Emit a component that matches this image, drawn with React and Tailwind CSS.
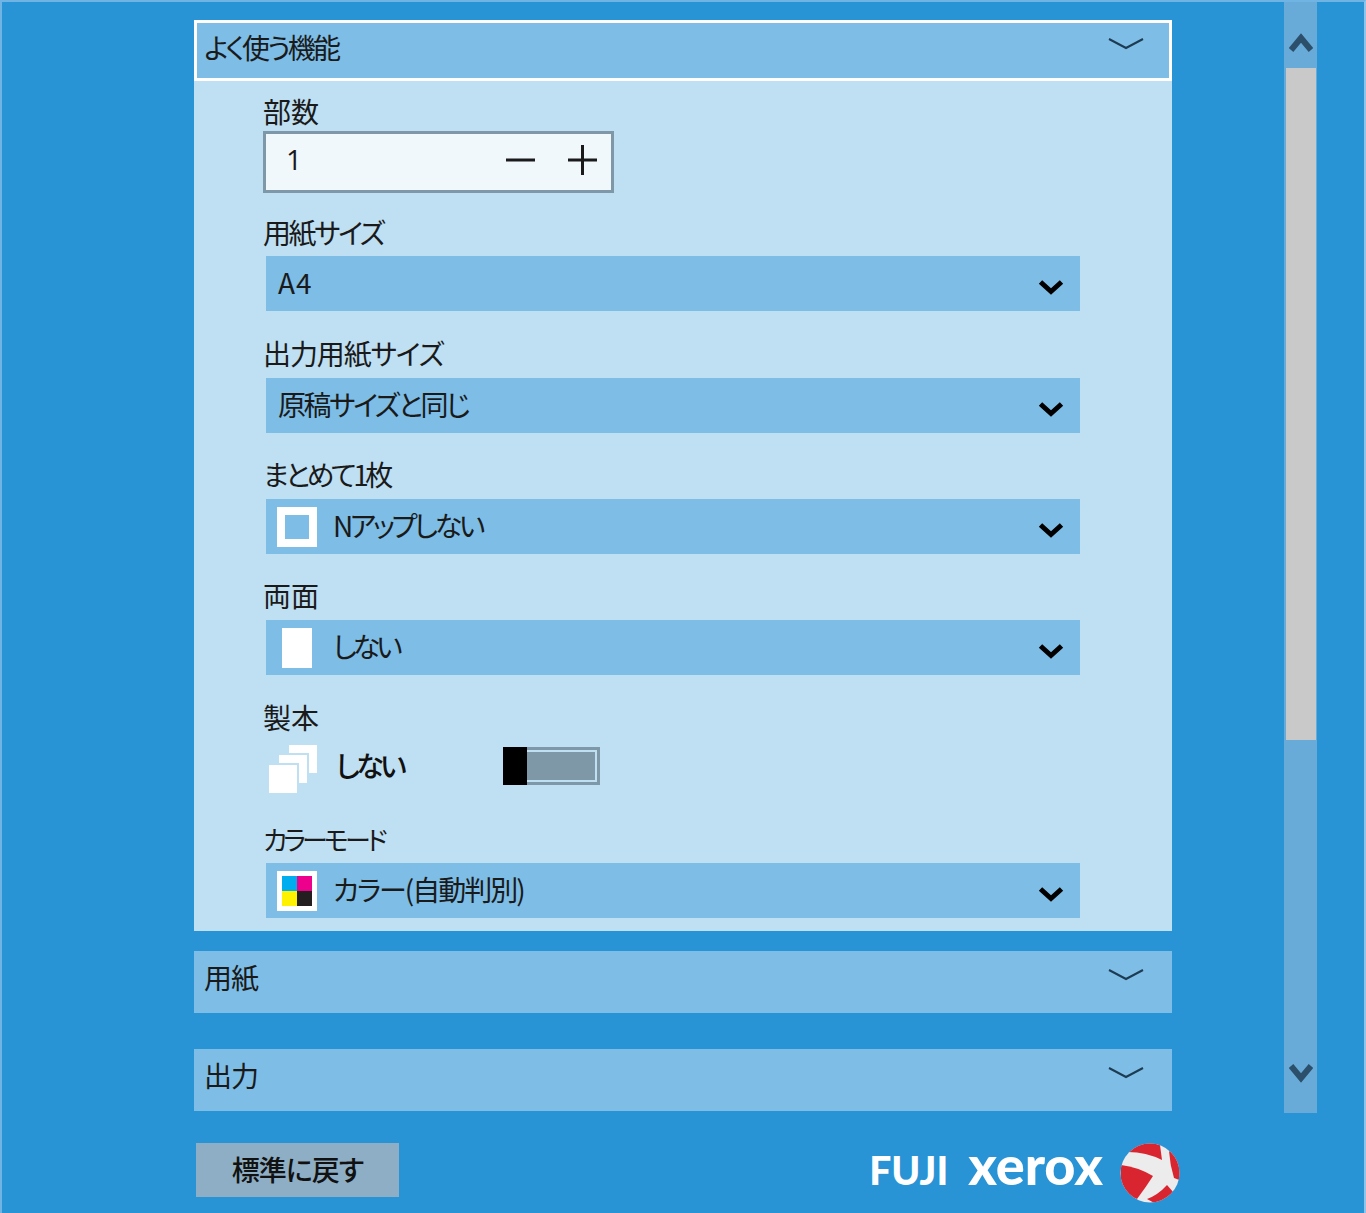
import React from 'react';

const jp = "font-['Noto_Sans_CJK_JP','Noto_Sans',sans-serif]";

const Chevron = () => (
  <svg width="26" height="18" viewBox="0 0 26 18" fill="none" className="mt-[6px] shrink-0">
    <path d="M2.5 4 L13 13.5 L23.5 4" stroke="#000" strokeWidth="5" />
  </svg>
);

const ThinChevron = () => (
  <svg width="36" height="14" viewBox="0 0 36 14" fill="none">
    <path d="M1 2 L18 11 L35 2" stroke="#1d3b52" strokeWidth="2" />
  </svg>
);

const Label = ({ tracking = 'text-[28px]', children }) => (
  <div className={`h-[36px] pl-[69px] leading-[34px] text-[#1a1a1a] [font-feature-settings:'palt'] ${tracking}`}>{children}</div>
);

const Select = ({ icon, tracking, children }) => (
  <div className="ml-[72px] flex h-[55px] w-[814px] items-center bg-[#7dbde6] pr-[16px] text-[28px] text-[#1a1a1a] [font-feature-settings:'palt']">
    {icon ? (
      <div className="mr-[5px] flex w-[62px] shrink-0 justify-center">{icon}</div>
    ) : (
      <div className="w-[12px] shrink-0" />
    )}
    <span className={`flex-1 pb-[3px] ${tracking}`}>{children}</span>
    <Chevron />
  </div>
);

const SectionHead = ({ children }) => (
  <div className="flex h-[62px] items-center justify-between bg-[#7dbde6] pl-[10px] pr-[28px] text-[28px] text-[#1a1a1a] [font-feature-settings:'palt']">
    <span className="mb-[10px] tracking-[-1px]">{children}</span>
    <span className="mb-[15px]"><ThinChevron /></span>
  </div>
);

const NupIcon = () => (
  <div className="flex size-[40px] items-center justify-center bg-white">
    <div className="size-[24px] bg-[#7dbde6]" />
  </div>
);

const PageIcon = () => <div className="h-[40px] w-[30px] bg-white" />;

const ColorIcon = () => (
  <div className="flex size-[40px] items-center justify-center bg-white">
    <div className="grid size-[30px] grid-cols-2">
      <div className="bg-[#00aeef]" />
      <div className="bg-[#ec008c]" />
      <div className="bg-[#fff200]" />
      <div className="bg-[#231f20]" />
    </div>
  </div>
);

const BookIcon = () => (
  <svg width="48" height="48" viewBox="0 0 48 48" className="mt-[6px] shrink-0">
    <rect x="20" y="0" width="28" height="28" fill="#fff" />
    <rect x="8" y="8" width="32" height="32" fill="#bfdff2" />
    <rect x="10" y="10" width="28" height="28" fill="#fff" />
    <rect x="-2" y="18" width="32" height="32" fill="#bfdff2" />
    <rect x="0" y="20" width="28" height="28" fill="#fff" />
  </svg>
);

const Globe = () => (
  <svg width="60" height="60" viewBox="0 0 60 60" className="shrink-0">
    <defs>
      <clipPath id="ball"><circle cx="30" cy="30" r="29.5" /></clipPath>
    </defs>
    <circle cx="30" cy="30" r="29.5" fill="#ececec" />
    <g clipPath="url(#ball)" fill="#d9252f">
      <path d="M1 22 Q18 24 33 33 Q26 44 17 56 L0 50 Z" />
      <path d="M8 9 Q10 0 30 -1 L40 2 L42 17 Q26 9 8 9 Z" />
      <path d="M49 8 L62 14 L62 38 L54 35 Q50 22 49 8 Z" />
      <path d="M47 42 L54 50 L38 62 L27 56 Q38 52 47 42 Z" />
    </g>
  </svg>
);

const App = () => {
  return (
    <div className={`${jp} flex h-[1213px] w-[1366px] overflow-hidden border-t-2 border-l-2 border-r-2 border-t-[#6fb4e2] border-l-[#6fb4e2] border-r-[#8fc4ea] bg-[#2893d5]`}>
      {/* main column */}
      <div className="ml-[192px] flex w-[978px] flex-col pt-[18px]">
        <div className="flex h-[61px] items-center justify-between border-[3px] border-white bg-[#7dbde6] pl-[7px] pr-[25px] text-[28px] text-[#1a1a1a] [font-feature-settings:'palt']">
          <span className="mb-[8px] tracking-[-2.8px]">よく使う機能</span>
          <span className="mb-[14px]"><ThinChevron /></span>
        </div>

        <div className="h-[850px] bg-[#bfdff2] pt-[13px]">
          <Label>部数</Label>
          <div className="mt-[1px] ml-[69px] flex h-[62px] w-[351px] items-center border-[3px] border-[#7f98a8] bg-[#f1f8fc] pl-[20px] text-[#1a1a1a]">
            <span className="mb-[6px] flex-1 font-['Open_Sans',sans-serif] text-[28px]">1</span>
            <svg width="92" height="32" viewBox="0 0 92 32" fill="none" className="mr-[13px] mb-[4px]">
              <path d="M0 16 H29" stroke="#1a1a1a" strokeWidth="3" />
              <path d="M62 16 H91 M76.5 1 V31" stroke="#1a1a1a" strokeWidth="3" />
            </svg>
          </div>

          <div className="mt-[22px]"><Label tracking="text-[28px] tracking-[-2.4px]">用紙サイズ</Label></div>
          <div className="mt-[5px]"><Select tracking="tracking-[1px]">A4</Select></div>

          <div className="mt-[25px]"><Label tracking="text-[28px] tracking-[-1.1px]">出力用紙サイズ</Label></div>
          <div className="mt-[6px]"><Select tracking="tracking-[-2.4px]">原稿サイズと同じ</Select></div>

          <div className="mt-[24px]"><Label tracking="text-[28px] tracking-[-3.5px]">まとめて1枚</Label></div>
          <div className="mt-[6px]"><Select icon={<NupIcon />} tracking="tracking-[-3.2px]">Nアップしない</Select></div>

          <div className="mt-[24px]"><Label>両面</Label></div>
          <div className="mt-[6px]"><Select icon={<PageIcon />} tracking="tracking-[-4px]">しない</Select></div>

          <div className="mt-[25px]"><Label>製本</Label></div>
          <div className="ml-[75px] flex h-[55px] items-center pt-[4px]">
            <BookIcon />
            <span className="ml-[19px] w-[167px] pb-[2px] text-[28px] font-medium tracking-[-3.5px] text-[#111] [font-feature-settings:'palt']">しない</span>
            <div className="relative h-[38px] w-[97px] border-[3px] border-[#7f98a8] bg-[#7f98a8]">
              <div className="h-full w-full border-[2px] border-[#bfdff2] bg-[#7f98a8]" />
              <div className="absolute -top-[3px] -left-[3px] h-[38px] w-[24px] bg-black" />
            </div>
          </div>

          <div className="mt-[31px]"><Label tracking="text-[26px] tracking-[-3.7px]">カラーモード</Label></div>
          <div className="mt-[5px]"><Select icon={<ColorIcon />} tracking="tracking-[-2px]">カラー(自動判別)</Select></div>
        </div>

        <div className="mt-[20px]"><SectionHead>用紙</SectionHead></div>
        <div className="mt-[36px]"><SectionHead>出力</SectionHead></div>

        <div className="mt-[32px] flex items-start justify-between pl-[2px]">
          <div className="flex h-[54px] w-[203px] items-center justify-center bg-[#8daec4] pb-[2px] text-[28px] font-medium tracking-[-1px] text-[#111] [font-feature-settings:'palt']">
            標準に戻す
          </div>
          <div className="-mr-[8px] flex items-start gap-[17px]">
            <div className="-mt-[5px] flex items-baseline gap-[20px] font-['Lato',sans-serif] leading-none font-black text-white">
              <span className="text-[39px]">FUJI</span>
              <span className="text-[54px]">xerox</span>
            </div>
            <Globe />
          </div>
        </div>
      </div>

      {/* scrollbar */}
      <div className="ml-[112px] flex h-[1111px] w-[33px] flex-col items-center bg-[#68abd9]">
        <div className="flex h-[66px] w-full items-center justify-center pt-[28px] pb-[14px]">
          <svg width="24" height="20" viewBox="0 0 24 20" fill="none">
            <path d="M2 18 L12 6 L22 18" stroke="#2c4f6b" strokeWidth="6" />
          </svg>
        </div>
        <div className="h-[672px] w-[30px] bg-[#c9c9c9]" />
        <div className="flex-1" />
        <div className="mb-[29px]">
          <svg width="24" height="20" viewBox="0 0 24 20" fill="none">
            <path d="M2 2 L12 14 L22 2" stroke="#2c4f6b" strokeWidth="6" />
          </svg>
        </div>
      </div>
    </div>
  );
};

export default App;
